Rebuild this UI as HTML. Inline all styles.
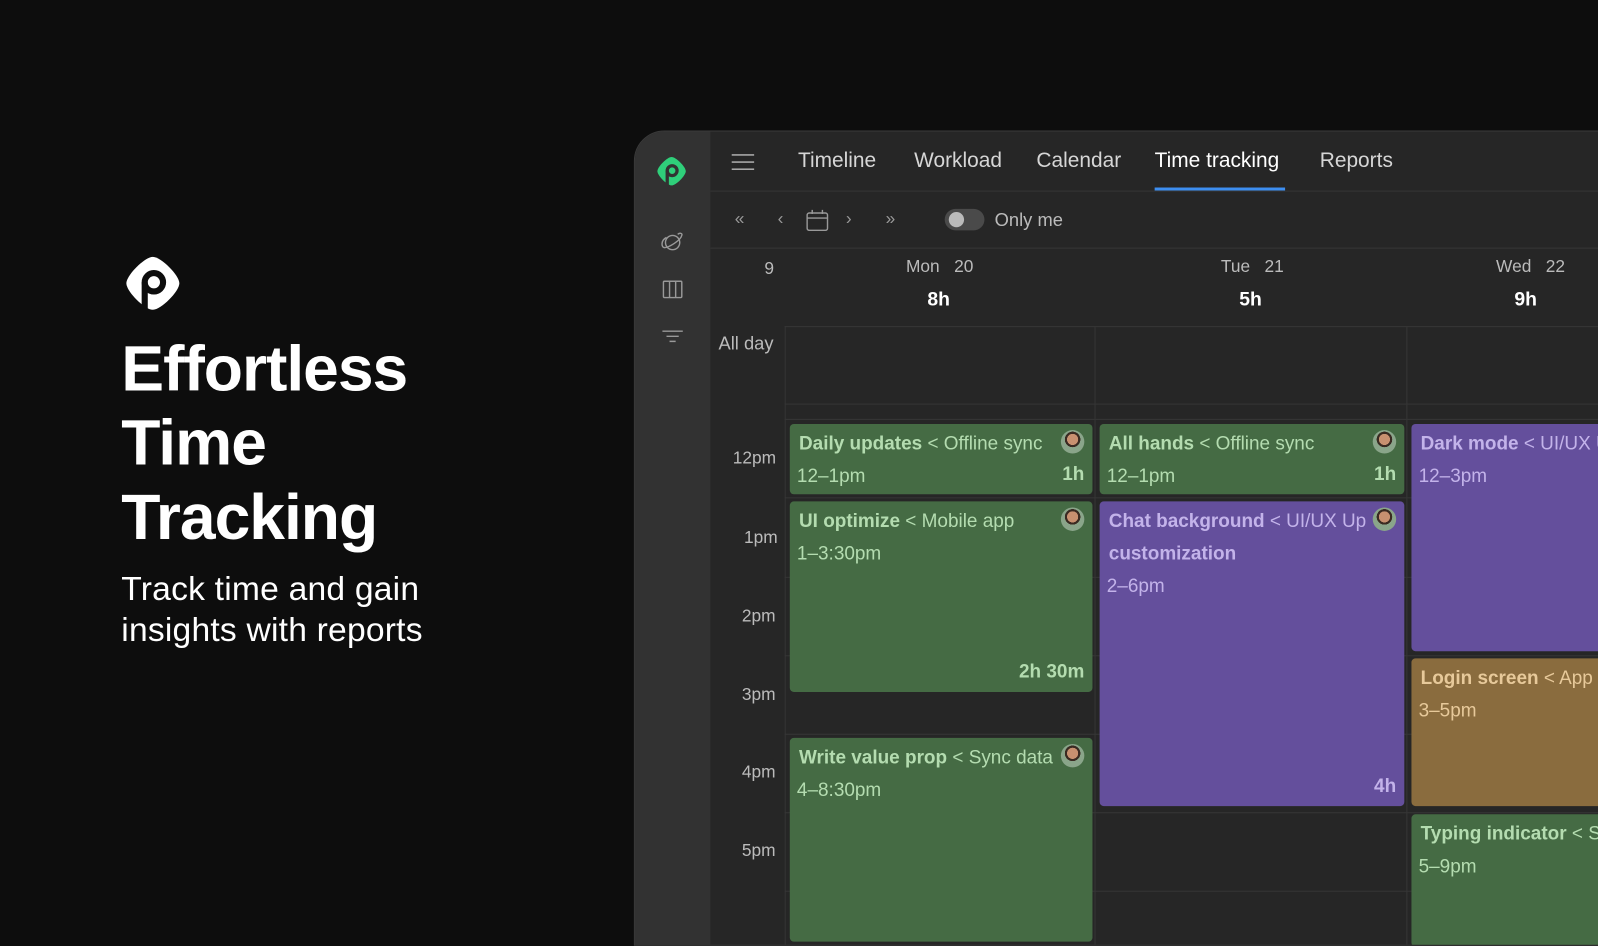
<!DOCTYPE html>
<html><head><meta charset="utf-8"><style>
*{margin:0;padding:0;box-sizing:border-box}
body{width:1598px;height:900px;background:#0d0d0d;font-family:"Liberation Sans",sans-serif;overflow:hidden;position:relative;color:#ddd}
#wrap{position:absolute;left:0;top:0;width:1568px;height:883px;transform:scale(1.0191);transform-origin:0 0}
.abs{position:absolute}
h1{position:absolute;left:119px;top:326px;font-size:63px;line-height:73px;color:#fff;font-weight:700;letter-spacing:-1px}
.sub{position:absolute;left:119px;top:558px;font-size:33px;line-height:40px;color:#fff;letter-spacing:0.2px}
.app{position:absolute;left:622px;top:128px;width:1000px;height:800px;background:#262626;border-radius:30px 0 0 0;border:1px solid #3a3a3a;overflow:hidden}
.side{position:absolute;left:0;top:0;width:74px;height:800px;background:#323232}
.tab{position:absolute;top:17px;font-size:20.5px;color:#d6d6d6}
.hl{position:absolute;height:1px;background:#363636}
.vl{position:absolute;width:1px;background:#353535}
.t{position:absolute;font-size:17px;color:#bbb}
.ev{position:absolute;border-radius:4px;padding:3px 9px 8px;font-size:18.6px;line-height:32px;white-space:nowrap;overflow:hidden}
.g{background:#456b44;color:#b4dcb0}
.p{background:#644f9c;color:#c3b3ea}
.o{background:#8a6c3e;color:#e7c99a}
.ev b{font-weight:700}
.ev .tm{display:block;margin-left:-2px}
.av{position:absolute;top:6px;right:8px;width:23px;height:23px;border-radius:50%;background:radial-gradient(circle at 50% 40%,#c89070 0 30%,#3a2a22 31% 42%,#8aa58a 43%)}
.dur{position:absolute;right:8px;bottom:4px;font-weight:700}
</style></head><body><div id="wrap">
<svg class="abs" style="left:122px;top:250px" width="56" height="56" viewBox="0 0 56 56"><path d="M28 2 C36 2 54 20 54 28 C54 36 36 54 28 54 C20 54 2 36 2 28 C2 20 20 2 28 2Z" fill="#fff"/><circle cx="29" cy="27" r="9" fill="none" stroke="#0d0d0d" stroke-width="6"/><rect x="17" y="27" width="6" height="26" fill="#0d0d0d"/></svg>
<h1>Effortless<br>Time<br>Tracking</h1>
<div class="sub">Track time and gain<br>insights with reports</div>
<div class="app">
 <div class="side">
  <svg class="abs" style="left:21px;top:24px" width="30" height="30" viewBox="0 0 56 56"><path d="M28 2 C36 2 54 20 54 28 C54 36 36 54 28 54 C20 54 2 36 2 28 C2 20 20 2 28 2Z" fill="#2fcf7a"/><circle cx="29" cy="27" r="9" fill="none" stroke="#323232" stroke-width="6"/><rect x="17" y="27" width="6" height="26" fill="#323232"/></svg>
  <svg class="abs" style="left:25px;top:98px" width="24" height="22" viewBox="0 0 24 22" fill="none" stroke="#999" stroke-width="1.4"><circle cx="12" cy="11" r="7"/><path d="M6 6 C0 9 1 16 4 16 C8 16 20 9 21 4 C22 2 19 1 17 3"/></svg>
  <svg class="abs" style="left:27px;top:146px" width="20" height="18" fill="none" stroke="#999" stroke-width="1.4"><rect x="1" y="1" width="18" height="16" rx="1"/><path d="M7 1V17M13 1V17"/></svg>
  <svg class="abs" style="left:26px;top:194px" width="22" height="14" stroke="#999" stroke-width="1.4"><path d="M1 2H21M5 7H17M8 12H14"/></svg>
 </div>
 <svg class="abs" style="left:94px;top:21px" width="24" height="18" stroke="#bbb" stroke-width="1.4"><path d="M1 2H23M1 9H23M1 16H23"/></svg>
 <div class="tab" style="left:160px">Timeline</div>
 <div class="tab" style="left:274px">Workload</div>
 <div class="tab" style="left:394px">Calendar</div>
 <div class="tab" style="left:510px;color:#fff">Time tracking</div>
 <div class="abs" style="left:510px;top:55px;width:128px;height:3px;background:#3d8ef0"></div>
 <div class="tab" style="left:672px">Reports</div>
 <div class="hl" style="left:74px;top:58px;width:930px"></div>
 <div class="t" style="left:98px;top:76px;color:#999">«</div>
 <div class="t" style="left:140px;top:76px;color:#999">‹</div>
 <svg class="abs" style="left:168px;top:76px" width="22" height="22" fill="none" stroke="#999" stroke-width="1.4"><rect x="1" y="4" width="20" height="17" rx="2"/><path d="M1 9H21M6 1V5M16 1V5"/></svg>
 <div class="t" style="left:207px;top:76px;color:#999">›</div>
 <div class="t" style="left:246px;top:76px;color:#999">»</div>
 <div class="abs" style="left:304px;top:76px;width:39px;height:21px;border-radius:11px;background:#4a4a4a"><div class="abs" style="left:4px;top:3px;width:15px;height:15px;border-radius:50%;background:#bbb"></div></div>
 <div class="t" style="left:353px;top:77px;font-size:18px">Only me</div>
 <div class="hl" style="left:74px;top:114px;width:930px"></div>
 <div class="t" style="left:127px;top:125px">9</div>
 <div class="t" style="left:266px;top:123px">Mon &nbsp; 20</div>
 <div class="t" style="left:287px;top:155px;color:#fff;font-size:19px;font-weight:700">8h</div>
 <div class="t" style="left:575px;top:123px">Tue &nbsp; 21</div>
 <div class="t" style="left:593px;top:155px;color:#fff;font-size:19px;font-weight:700">5h</div>
 <div class="t" style="left:845px;top:123px">Wed &nbsp; 22</div>
 <div class="t" style="left:863px;top:155px;color:#fff;font-size:19px;font-weight:700">9h</div>
 <div class="hl" style="left:147px;top:191px;width:860px"></div>
 <div class="t" style="left:82px;top:198px;font-size:18px">All day</div>
 <div class="hl" style="left:147px;top:267px;width:860px"></div>
 <div class="hl" style="left:147px;top:282px;width:860px"></div>
 <div class="vl" style="left:147px;top:191px;height:620px"></div>
 <div class="vl" style="left:451px;top:191px;height:620px"></div>
 <div class="vl" style="left:757px;top:191px;height:620px"></div>
 <div class="hl" style="left:147px;top:359px;width:860px"></div>
 <div class="hl" style="left:147px;top:437px;width:860px"></div>
 <div class="hl" style="left:147px;top:514px;width:860px"></div>
 <div class="hl" style="left:147px;top:591px;width:860px"></div>
 <div class="hl" style="left:147px;top:668px;width:860px"></div>
 <div class="hl" style="left:147px;top:745px;width:860px"></div>
 <div class="t" style="left:96px;top:311px">12pm</div>
 <div class="t" style="left:107px;top:389px">1pm</div>
 <div class="t" style="left:105px;top:466px">2pm</div>
 <div class="t" style="left:105px;top:543px">3pm</div>
 <div class="t" style="left:105px;top:619px">4pm</div>
 <div class="t" style="left:105px;top:696px">5pm</div>

 <div class="ev g" style="left:152px;top:287px;width:297px;height:69px"><b>Daily updates</b> &lt; Offline sync<span class="tm">12–1pm</span><div class="av"></div><span class="dur">1h</span></div>
 <div class="ev g" style="left:456px;top:287px;width:299px;height:69px"><b>All hands</b> &lt; Offline sync<span class="tm">12–1pm</span><div class="av"></div><span class="dur">1h</span></div>
 <div class="ev p" style="left:762px;top:287px;width:260px;height:223px"><b>Dark mode</b> &lt; UI/UX Up<span class="tm">12–3pm</span></div>
 <div class="ev g" style="left:152px;top:363px;width:297px;height:187px"><b>UI optimize</b> &lt; Mobile app<span class="tm">1–3:30pm</span><div class="av"></div><span class="dur">2h 30m</span></div>
 <div class="ev p" style="left:456px;top:363px;width:299px;height:299px;white-space:normal"><b>Chat background</b> &lt; UI/UX Up<br><b>customization</b><span class="tm" style="margin-top:0">2–6pm</span><div class="av"></div><span class="dur">4h</span></div>
 <div class="ev o" style="left:762px;top:517px;width:260px;height:145px"><b>Login screen</b> &lt; App v<span class="tm">3–5pm</span></div>
 <div class="ev g" style="left:152px;top:595px;width:297px;height:200px"><b>Write value prop</b> &lt; Sync data<span class="tm">4–8:30pm</span><div class="av"></div></div>
 <div class="ev g" style="left:762px;top:670px;width:260px;height:130px"><b>Typing indicator</b> &lt; Sync<span class="tm">5–9pm</span></div>
</div>
</div></body></html>
